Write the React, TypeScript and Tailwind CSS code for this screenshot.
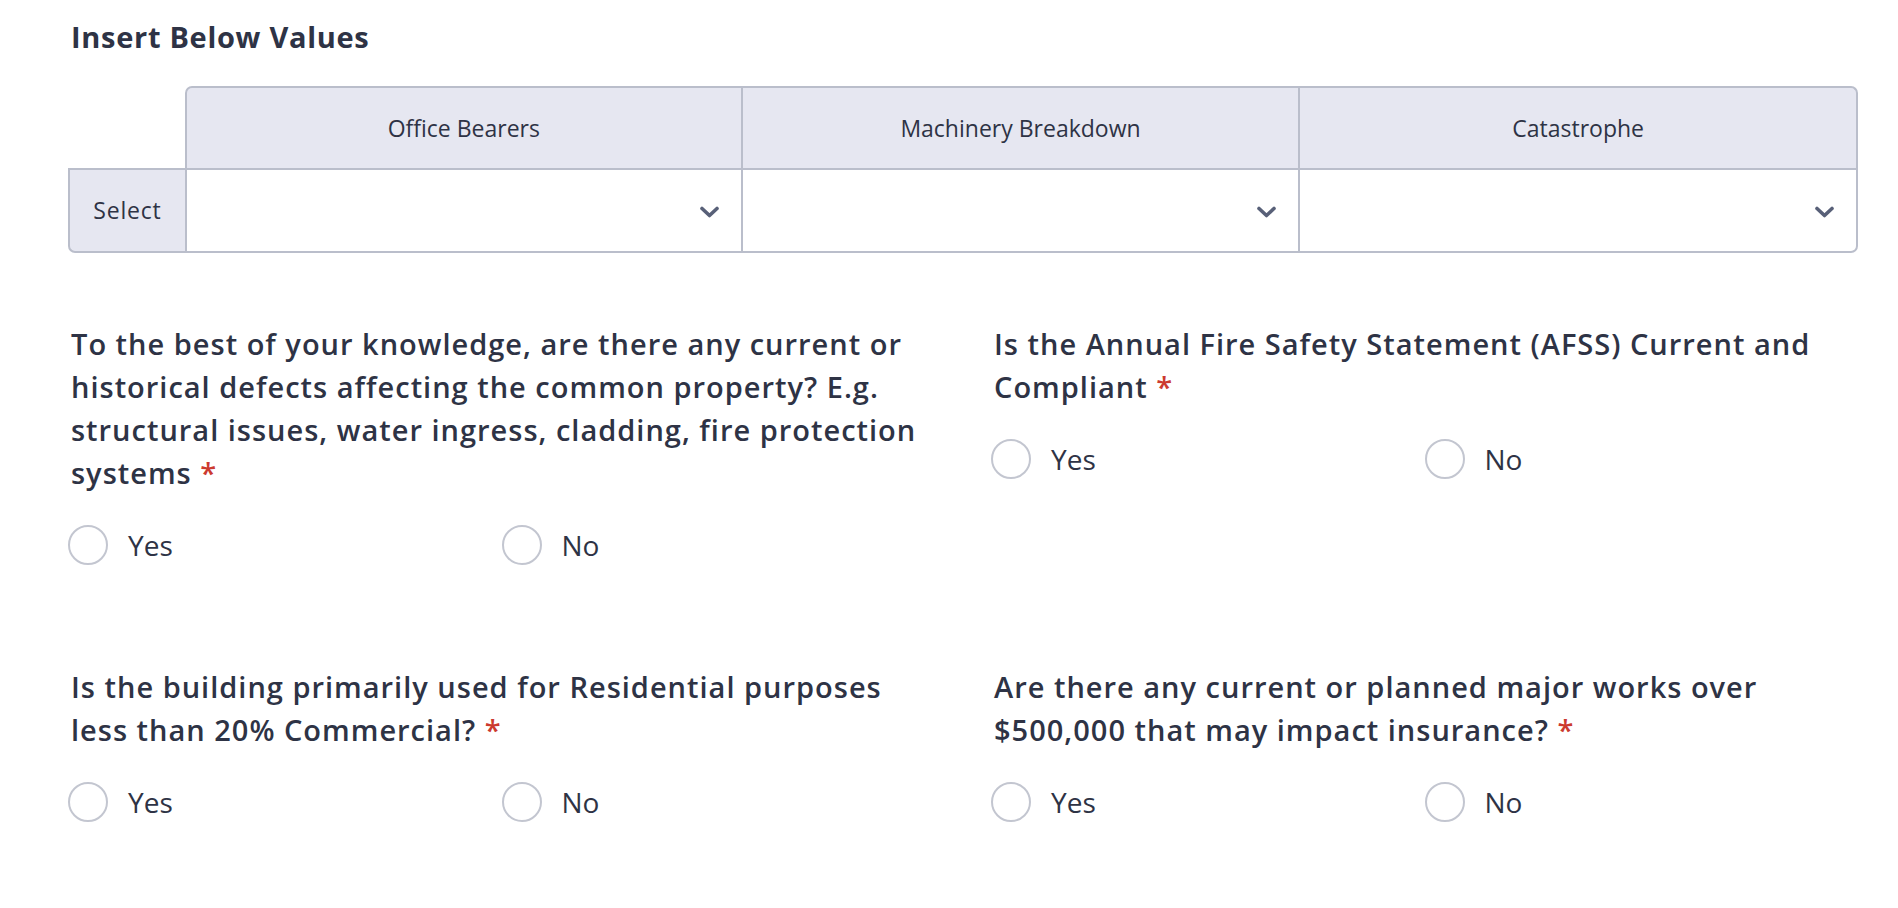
import React from "react";

const border = "border-[#babecb]";

function Chevron() {
  return (
    <svg width="19" height="12" viewBox="0 0 19 12" fill="none" aria-hidden className="mt-[3px]">
      <polyline
        points="2,2.5 9.5,9.5 17,2.5"
        stroke="#586078"
        strokeWidth="3.6"
        strokeLinecap="round"
        strokeLinejoin="round"
      />
    </svg>
  );
}

function Radio({ label }: { label: string }) {
  return (
    <label className="flex items-center gap-[20px] cursor-pointer">
      <span className="w-[40px] h-[40px] rounded-full border-2 border-[#c3c6d0] bg-white shrink-0" />
      <span className="text-[28px] leading-[40px] text-[#2e3345]">{label}</span>
    </label>
  );
}

function Question({ text }: { text: string }) {
  return (
    <div>
      <p className="text-[29px] leading-[43px] font-semibold tracking-[1px] text-[#2e3345] pl-[3px]">
        {text} <span className="text-[#cc3a2f]">*</span>
      </p>
      <div className="grid grid-cols-2 mt-[31px]">
        <Radio label="Yes" />
        <Radio label="No" />
      </div>
    </div>
  );
}

const columns = ["Office Bearers", "Machinery Breakdown", "Catastrophe"];

export default function App() {
  return (
    <div
      className="min-h-screen bg-white pl-[68px] pr-[40px] pt-[16px]"
      style={{ fontFamily: "'Open Sans', 'Noto Sans', sans-serif" }}
    >
      <h2 className="text-[29px] leading-[42px] font-bold tracking-[0.7px] text-[#2e3345] pl-[3px]">
        Insert Below Values
      </h2>

      <div className="grid grid-cols-[117px_1fr_1fr_1fr] mt-[28px] text-[23px] text-[#2e3345]">
        <div />
        {columns.map((c, i) => (
          <div
            key={c}
            className={`h-[82px] flex items-center justify-center bg-[#e6e7f1] border-t-2 border-r-2 ${border} ${
              i === 0 ? "border-l-2 rounded-tl-[7px]" : ""
            } ${i === 2 ? "rounded-tr-[7px]" : ""}`}
          >
            {c}
          </div>
        ))}
        <div
          className={`h-[85px] flex items-center justify-center bg-[#e6e7f1] border-l-2 border-t-2 border-b-2 rounded-bl-[7px] tracking-[0.8px] ${border}`}
        >
          Select
        </div>
        {columns.map((c, i) => (
          <div
            key={c}
            className={`h-[85px] flex items-center justify-end pr-[22px] bg-white border-t-2 border-r-2 border-b-2 ${border} ${
              i === 0 ? "border-l-2" : ""
            } ${i === 2 ? "rounded-br-[7px]" : ""}`}
          >
            <Chevron />
          </div>
        ))}
      </div>

      <div className="grid grid-cols-2 gap-x-[56px] gap-y-[100px] mt-[69px]">
        <Question text="To the best of your knowledge, are there any current or historical defects affecting the common property? E.g. structural issues, water ingress, cladding, fire protection systems" />
        <Question text="Is the Annual Fire Safety Statement (AFSS) Current and Compliant" />
        <Question text="Is the building primarily used for Residential purposes less than 20% Commercial?" />
        <Question text="Are there any current or planned major works over $500,000 that may impact insurance?" />
      </div>
    </div>
  );
}
